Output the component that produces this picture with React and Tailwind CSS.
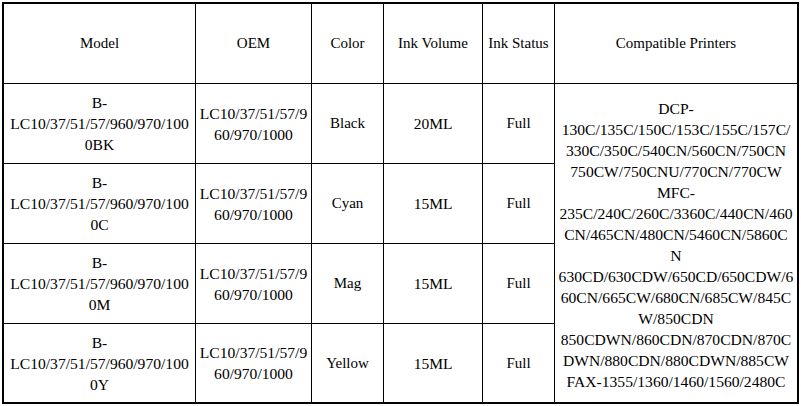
import React from "react";

function Cell({ children, className = "" }) {
  return (
    <div
      className={
        "bg-white flex flex-col items-center justify-center text-center text-black leading-[21px] whitespace-nowrap font-['Liberation_Serif','Times_New_Roman',serif] " +
        className
      }
    >
      {children}
    </div>
  );
}

function Lines({ lines, className = "" }) {
  return (
    <Cell className={className}>
      {lines.map((l, i) => (
        <span key={i}>{l}</span>
      ))}
    </Cell>
  );
}

const rows = [
  { suffix: "0BK", color: "Black", vol: "20ML" },
  { suffix: "0C", color: "Cyan", vol: "15ML" },
  { suffix: "0M", color: "Mag", vol: "15ML" },
  { suffix: "0Y", color: "Yellow", vol: "15ML" },
];

const printers = [
  "DCP-",
  "130C/135C/150C/153C/155C/157C/",
  "330C/350C/540CN/560CN/750CN",
  "750CW/750CNU/770CN/770CW",
  "MFC-",
  "235C/240C/260C/3360C/440CN/460",
  "CN/465CN/480CN/5460CN/5860C",
  "N",
  "630CD/630CDW/650CD/650CDW/6",
  "60CN/665CW/680CN/685CW/845C",
  "W/850CDN",
  "850CDWN/860CDN/870CDN/870C",
  "DWN/880CDN/880CDWN/885CW",
  "FAX-1355/1360/1460/1560/2480C",
];

export default function App() {
  return (
    <div className="w-[801px] h-[406px] bg-white pt-[2px] pl-[2px] font-['Liberation_Serif',serif]">
      <div className="w-[797px] border-2 border-black bg-black grid gap-px grid-cols-[191px_115px_71px_98px_71px_242px] grid-rows-[79px_79px_79px_79px_78px]">
        <Cell className="text-[15px]">Model</Cell>
        <Cell className="text-[15px]">OEM</Cell>
        <Cell className="text-[15px]">Color</Cell>
        <Cell className="text-[15px]">Ink Volume</Cell>
        <Cell className="text-[15px]">Ink Status</Cell>
        <Cell className="text-[15px]">Compatible Printers</Cell>

        {rows.map((r, i) => (
          <React.Fragment key={i}>
            <Lines
              className="text-[15.6px]"
              lines={["B-", "LC10/37/51/57/960/970/100", r.suffix]}
            />
            <Lines className="text-[15.6px]" lines={["LC10/37/51/57/9", "60/970/1000"]} />
            <Cell className="text-[15px]">{r.color}</Cell>
            <Cell className="text-[15.5px]">{r.vol}</Cell>
            <Cell className="text-[15px]">Full</Cell>
            {i === 0 && (
              <Lines
                className="row-start-2 row-span-4 col-start-6 pt-[3px] text-[15.6px]"
                lines={printers}
              />
            )}
          </React.Fragment>
        ))}
      </div>
    </div>
  );
}
